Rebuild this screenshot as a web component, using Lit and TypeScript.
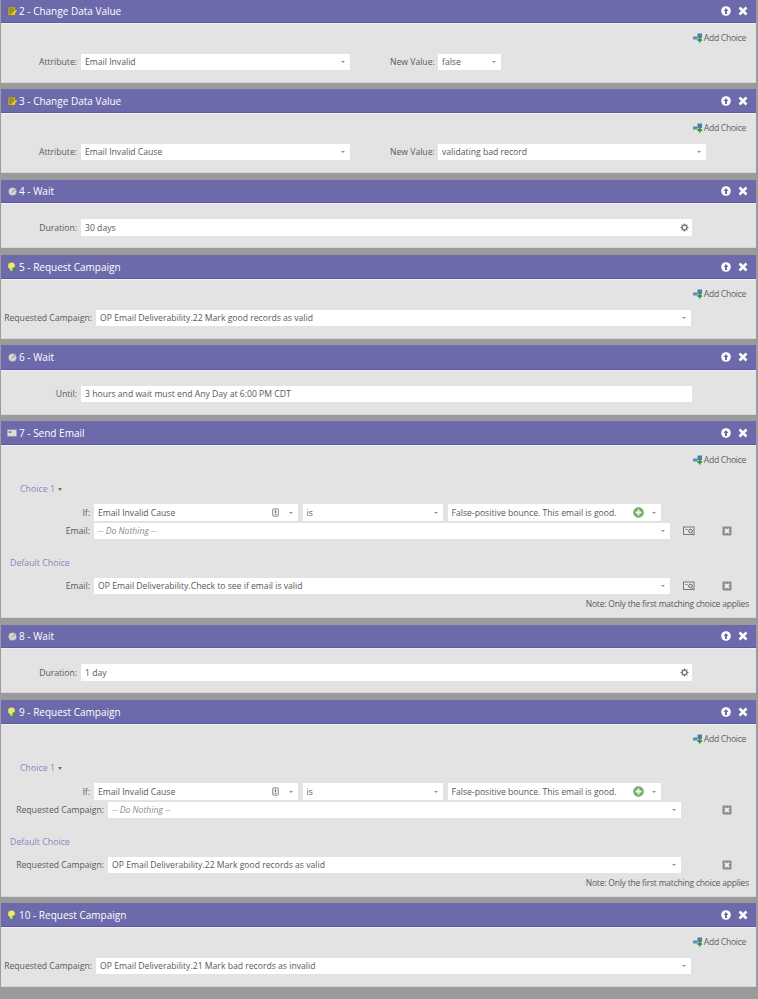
import { LitElement, html, css, svg } from "lit";
import { customElement } from "lit/decorators.js";
import { styleMap } from "lit/directives/style-map.js";

const icons: Record<string, unknown> = {
  data: svg`<svg viewBox="0 0 10 10" width="10" height="10"><rect x="1" y="1" width="7.500" height="8.500" fill="#c9b24a" stroke="#77702f" stroke-width=".7"/><path d="M2 3h5M2 5h5M2 7h3" stroke="#5f5a2a" stroke-width=".8"/><path d="M5 8l4-4 1 1-4 4z" fill="#e8d25a"/></svg>`,
  wait: svg`<svg viewBox="0 0 10 10" width="9" height="9"><circle cx="5" cy="5" r="4.300" fill="#d8d8d8" stroke="#aaa" stroke-width=".6"/><path d="M5 5L7.500 3" stroke="#666" stroke-width="1"/><path d="M5 5L3.500 6.500" stroke="#888" stroke-width=".8"/></svg>`,
  request: svg`<svg viewBox="0 0 10 10" width="10" height="10"><circle cx="4.500" cy="4" r="3.400" fill="#ece86a"/><rect x="3" y="7" width="3" height="2" fill="#b9b9a0"/><path d="M6 9.800V7H5l2-2.200L9 7H8v2.800z" fill="#3d8c3a"/></svg>`,
  email: svg`<svg viewBox="0 0 11 8" width="10" height="8"><rect x=".5" y=".5" width="10" height="7" fill="#dcdcdc" stroke="#aaa" stroke-width=".5"/><rect x="1.700" y="2" width="3" height="2" fill="#888"/></svg>`,
  up: svg`<svg viewBox="0 0 10 10" width="10" height="10"><circle cx="5" cy="5" r="4.800" fill="#fff"/><path d="M5 2L7.500 5H6V8H4V5H2.500z" fill="#6d6aab"/></svg>`,
  close: svg`<svg viewBox="0 0 10 10" width="10" height="10"><path d="M1.500 1.500L8.500 8.500M8.500 1.500L1.500 8.500" stroke="#fff" stroke-width="2.500"/></svg>`,
  add: svg`<svg viewBox="0 0 10 10" width="10" height="10"><rect x="0" y="3.500" width="4.500" height="3" fill="#5c8fb5"/><rect x="4.500" y=".5" width="4.500" height="4.500" fill="#4d7fa6"/><path d="M3 5v-1" stroke="#4d7fa6"/><path d="M6.700 4.500v5M4.500 7h4.500" stroke="#2f9a35" stroke-width="1.800"/></svg>`,
  gear: svg`<svg viewBox="0 0 10 10" width="9" height="9"><circle cx="5" cy="5" r="2.700" fill="none" stroke="#777" stroke-width="1.600"/><path d="M5 .5v2M5 7.500v2M.5 5h2M7.500 5h2M1.800 1.800l1.400 1.400M6.800 6.800l1.400 1.400M8.200 1.800L6.800 3.200M3.200 6.800L1.800 8.200" stroke="#777" stroke-width="1.100"/></svg>`,
  plus: svg`<svg viewBox="0 0 11 11" width="11" height="11"><circle cx="5.500" cy="5.500" r="5" fill="#6fb35f" stroke="#8a9a85" stroke-width=".6"/><path d="M5.500 2.500v6M2.500 5.500h6" stroke="#eef7e8" stroke-width="1.800"/></svg>`,
  info: svg`<svg viewBox="0 0 8 10" width="7" height="9"><rect x=".7" y=".7" width="6.600" height="8.600" rx="1" fill="#e8e8e8" stroke="#8a8a8a"/><path d="M4 2.500v3M4 6.500v1.200" stroke="#666" stroke-width="1.100"/></svg>`,
  preview: svg`<svg viewBox="0 0 12 10" width="12" height="10"><rect x=".5" y="1" width="10.500" height="7.500" fill="#e6e6e6" stroke="#777"/><rect x="2" y="3" width="3" height="1" fill="#999"/><circle cx="7.500" cy="5" r="1.800" fill="none" stroke="#666"/><path d="M9 7l2 2.500" stroke="#b58a3c" stroke-width="1.200"/></svg>`,
  del: svg`<svg viewBox="0 0 10 10" width="10" height="10"><rect x=".5" y=".5" width="9" height="9" rx="1" fill="#8d8d8d"/><path d="M3 3l4 4M7 3L3 7" stroke="#f2f2f2" stroke-width="1.800"/></svg>`,
};

const field = (text: string, width: number, o: { em?: boolean; tall?: boolean; arrow?: boolean; extra?: string } = {}) => html`
  <div class="field ${o.tall ? "tall" : ""}" style=${styleMap({ width: `${width}px` })}>
    <span class="val ${o.em ? "em" : ""}">${text}</span>
    ${o.extra ? html`<span class="fi ${o.extra}">${icons[o.extra]}</span>` : ""}
    ${o.arrow === false ? "" : html`<span class="caret"></span>`}
  </div>`;

const label = (text: string, width: number, extra = "") => html`
  <div class="lab ${extra}" style=${styleMap({ width: `${width}px` })}>${text}</div>`;

const add = html`<div class="add"><span class="ai">${icons.add}</span>Add Choice</div>`;
const note = html`<div class="note">Note: Only the first matching choice applies</div>`;

const choiceBlock = (name: string, labW: number, fieldW: number, first: unknown, dflt: string, previewed: boolean) => html`
  ${add}
  <div class="choice">Choice 1 <span class="tri"></span></div>
  <div class="row r-if">
    ${label("If:", 89, "dark")}
    ${field("Email Invalid Cause", 203.5, { tall: true, extra: "info" })}
    ${field("is", 140, { tall: true })}
    ${field("False-positive bounce. This email is good.", 213, { tall: true, extra: "plus" })}
  </div>
  <div class="row r-then">
    ${label(name, labW, "dark")}
    ${first}
    ${previewed ? html`<span class="tool t-prev">${icons.preview}</span>` : ""}
    <span class="tool t-del" style=${styleMap({ marginLeft: previewed ? "24px" : "39px" })}>${icons.del}</span>
  </div>
  <div class="default">Default Choice</div>
  <div class="row r-dflt">
    ${label(name, labW, "dark")}
    ${field(dflt, fieldW)}
    ${previewed ? html`<span class="tool t-prev">${icons.preview}</span>` : ""}
    <span class="tool t-del" style=${styleMap({ marginLeft: previewed ? "24px" : "39px" })}>${icons.del}</span>
  </div>
  ${note}
`;

const dataBody = (attr: string, value: string, w: number) => html`
  ${add}
  <div class="row r-first">
    ${label("Attribute:", 76)}
    ${field(attr, 269)}
    <div class="lab second">New Value:</div>
    ${field(value, w)}
  </div>`;

const waitBody = (lab: string, val: string, gear: boolean) => html`
  <div class="row r-wait">
    ${label(lab, 76)}
    ${field(val, 611, { tall: gear, arrow: false, extra: gear ? "gear" : "" })}
  </div>`;

const campBody = (val: string) => html`
  ${add}
  <div class="row r-first">
    ${label("Requested Campaign:", 91)}
    ${field(val, 595)}
  </div>`;

interface Step { icon: string; title: string; hh: number; bh: number; gap: number; body: unknown; }

const steps: Step[] = [
  { icon: "data", title: "2 - Change Data Value", hh: 23, bh: 60, gap: 6, body: dataBody("Email Invalid", "false", 63) },
  { icon: "data", title: "3 - Change Data Value", hh: 24, bh: 60, gap: 7, body: dataBody("Email Invalid Cause", "validating bad record", 268) },
  { icon: "wait", title: "4 - Wait", hh: 23, bh: 45, gap: 7, body: waitBody("Duration:", "30 days", true) },
  { icon: "request", title: "5 - Request Campaign", hh: 24, bh: 60, gap: 6, body: campBody("OP Email Deliverability.22 Mark good records as valid") },
  { icon: "wait", title: "6 - Wait", hh: 25, bh: 45, gap: 6, body: waitBody("Until:", "3 hours and wait must end Any Day at 6:00 PM CDT", false) },
  { icon: "email", title: "7 - Send Email", hh: 24, bh: 173, gap: 7, body: choiceBlock("Email:", 89, 576, field("-- Do Nothing --", 576, { em: true }), "OP Email Deliverability.Check to see if email is valid", true) },
  { icon: "wait", title: "8 - Wait", hh: 23, bh: 45, gap: 7, body: waitBody("Duration:", "1 day", true) },
  { icon: "request", title: "9 - Request Campaign", hh: 24, bh: 173, gap: 6, body: choiceBlock("Requested Campaign:", 103, 573, field("-- Do Nothing --", 573, { em: true }), "OP Email Deliverability.22 Mark good records as valid", false) },
  { icon: "request", title: "10 - Request Campaign", hh: 24, bh: 60, gap: 12, body: campBody("OP Email Deliverability.21 Mark bad records as invalid") },
];

@customElement("app-root")
export class AppRoot extends LitElement {
  static styles = css`
    :host {
      display: block;
      background: #9b9b9e;
      padding: 0 1px 0 1px;
      height: 999px;
      box-sizing: border-box;
      overflow: hidden;
      font-family: "Open Sans", "Liberation Sans", sans-serif;
      font-size: 8.65px;
      color: #555;
    }
    .card { width: 755px; }
    .head {
      display: flex;
      align-items: center;
      box-sizing: border-box;
      background: #6d6aab;
      border-bottom: 1px solid #5e5ba6;
      color: #fff;
      font-size: 10px;
      padding: 0 8px 0 6px;
    }
    .hi { width: 10px; height: 10px; display: flex; align-items: center; justify-content: center; margin-right: 2px; }
    .title { flex: 1; white-space: nowrap; }
    .hb { width: 10px; height: 10px; display: flex; margin-left: 7px; }
    .body {
      box-sizing: border-box;
      background: #e3e3e3;
      border-top: 1px solid #efefef;
      border-bottom: 1px solid #d6d6d6;
    }
    .add {
      display: flex;
      align-items: center;
      justify-content: flex-end;
      height: 16px;
      padding-top: 6px;
      padding-right: 10px;
      font-size: 8.6px;
      letter-spacing: -.3px;
      color: #5d6266;
    }
    .ai { width: 10px; height: 10px; display: flex; margin-right: 1px; }
    .row { display: flex; align-items: center; }
    .r-first { margin-top: 8px; }
    .r-wait { margin-top: 15px; }
    .r-if { margin-top: 9px; }
    .r-then { margin-top: 2px; }
    .r-dflt { margin-top: 9px; }
    .lab { text-align: right; white-space: nowrap; margin-right: 4px; color: #5a5a5a; flex: none; }
    .lab.second { margin-left: 35px; width: 44px; }
    .field {
      display: flex;
      align-items: center;
      box-sizing: border-box;
      height: 16px;
      background: #fff;
      padding: 0 5px 0 4px;
      flex: none;
      margin-right: 5px;
    }
    .row .field:last-of-type { margin-right: 0; }
    .field.tall { height: 17px; }
    .val { flex: 1; white-space: nowrap; overflow: hidden; color: #58585a; }
    .val.em { font-style: italic; color: #8a8a8a; }
    .caret {
      width: 0; height: 0; flex: none; margin-left: 6px;
      border-left: 2.500px solid transparent;
      border-right: 2.500px solid transparent;
      border-top: 2.500px solid #909090;
    }
    .fi { display: flex; flex: none; }
    .fi.info { margin-right: 4px; }
    .fi.plus { margin-right: 2px; }
    .fi.gear { margin-right: -2px; }
    .tool { display: flex; flex: none; justify-content: center; width: 14px; }
    .t-prev { margin-left: 12px; }
    .choice { color: #8c86bd; margin: 15px 0 0 19px; height: 12px; line-height: 12px; display: flex; align-items: center; gap: 3px; font-size: 8.8px; }
    .tri { width: 0; height: 0; border-left: 2.500px solid transparent; border-right: 2.500px solid transparent; border-top: 3px solid #4b8f3c; }
    .default { color: #8c86bd; margin: 18px 0 0 9px; height: 12px; line-height: 12px; font-size: 8.8px; }
    .note { text-align: right; padding-right: 7px; margin-top: 4px; height: 12px; line-height: 12px; font-size: 8.5px; letter-spacing: -.2px; color: #5a5a5a; }
  `;

  render() {
    return html`${steps.map((s) => html`
      <section class="card" style=${styleMap({ marginBottom: `${s.gap}px` })}>
        <div class="head" style=${styleMap({ height: `${s.hh}px` })}>
          <span class="hi">${icons[s.icon]}</span>
          <span class="title">${s.title}</span>
          <span class="hb">${icons.up}</span>
          <span class="hb">${icons.close}</span>
        </div>
        <div class="body" style=${styleMap({ height: `${s.bh}px` })}>${s.body}</div>
      </section>`)}`;
  }
}
